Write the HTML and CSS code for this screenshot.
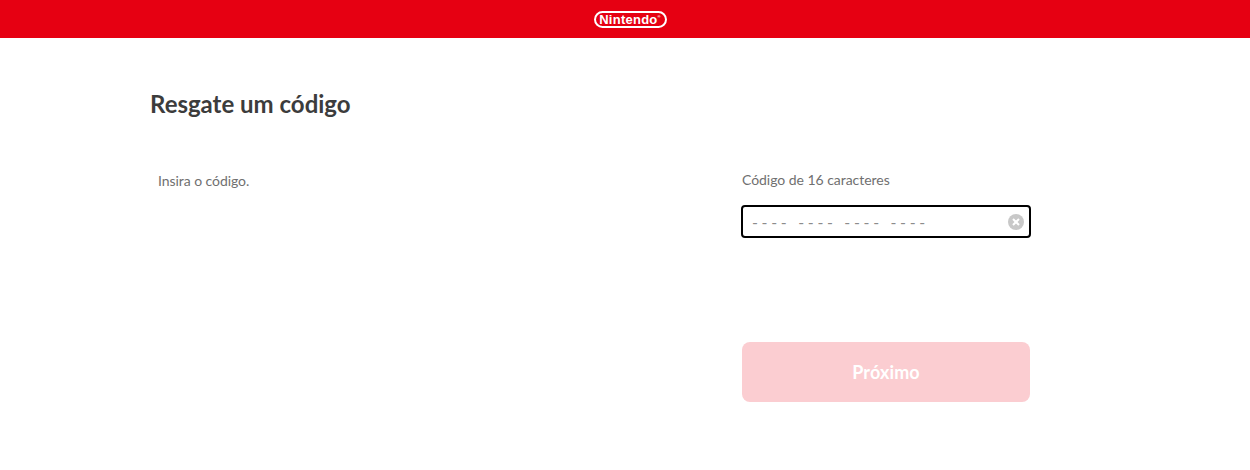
FILE: index.html
```html
<!DOCTYPE html>
<html lang="pt">
<head>
	<meta charset="UTF-8">
	<title>Resgate um código</title>
	<link rel="stylesheet" href="styles.css">
</head>
<body>
<header class="topBar">
	<span class="logo">Nintendo<sup class="logoMark">®</sup></span>
</header>
<main class="content">
	<h1 class="title">Resgate um código</h1>
	<div class="columns">
		<p class="intro">Insira o código.</p>
		<form class="codeForm">
			<label class="fieldLabel" for="code">Código de 16 caracteres</label>
			<div class="field">
				<input id="code" class="codeInput" type="text" placeholder="---- ---- ---- ----">
				<span class="clearBtn">
					<svg width="16" height="16" viewBox="0 0 16 16">
						<circle cx="8" cy="8" r="8" fill="#c8c8c8"/>
						<path d="M5 5l6 6M11 5l-6 6" stroke="#fff" stroke-width="2" fill="none"/>
					</svg>
				</span>
			</div>
			<button class="nextBtn" type="button">Próximo</button>
		</form>
	</div>
</main>
</body>
</html>
```

FILE: styles.css
```css
* {
	margin: 0;
	padding: 0;
	box-sizing: border-box;
}

body {
	background: #fff;
	font-family: Lato, "Liberation Sans", sans-serif;
	color: #707070;
}

.topBar {
	height: 38px;
	background: #e60012;
	display: flex;
	align-items: center;
	justify-content: center;
}

.logo {
	display: flex;
	align-items: center;
	justify-content: center;
	width: 73px;
	height: 17px;
	margin-left: 10px;
	border: 2px solid #fff;
	border-radius: 9px;
	color: #fff;
	font-family: "Liberation Sans", sans-serif;
	font-size: 13px;
	font-weight: bold;
	letter-spacing: 0.25px;
	line-height: 1;
}

.logoMark {
	font-size: 4px;
	line-height: 1;
	align-self: flex-start;
	margin-top: 2px;
}

.content {
	padding: 51px 220px 0 150px;
}

.title {
	font-size: 24px;
	line-height: 30px;
	font-weight: bold;
	color: #3c3c3c;
}

.columns {
	display: flex;
	justify-content: space-between;
	margin-top: 45px;
}

.intro {
	margin: 8px 0 0 8px;
	font-size: 14px;
	line-height: 17px;
	letter-spacing: -0.06px;
}

.codeForm {
	width: 288px;
	display: flex;
	flex-direction: column;
}

.fieldLabel {
	margin-top: 7px;
	font-size: 14px;
	line-height: 17px;
	letter-spacing: -0.04px;
}

.field {
	position: relative;
	margin: 17px -1px 0;
}

.codeInput {
	display: block;
	width: 100%;
	height: 33px;
	padding: 0 36px 0 9px;
	border: 2px solid #000;
	border-radius: 4px;
	outline: none;
	font-family: Lato, "Liberation Sans", sans-serif;
	font-size: 16px;
	letter-spacing: 3.66px;
	color: #333;
}

.codeInput::placeholder {
	color: #8c8c8c;
	opacity: 1;
}

.clearBtn {
	position: absolute;
	right: 7px;
	top: 9px;
	width: 16px;
	height: 16px;
}

.clearBtn svg {
	display: block;
}

.nextBtn {
	height: 60px;
	margin-top: 104px;
	border: none;
	border-radius: 8px;
	background: #fbcdd1;
	color: #fff;
	font-family: Lato, "Liberation Sans", sans-serif;
	font-size: 18px;
	font-weight: bold;
	letter-spacing: 0.12px;
}
```
